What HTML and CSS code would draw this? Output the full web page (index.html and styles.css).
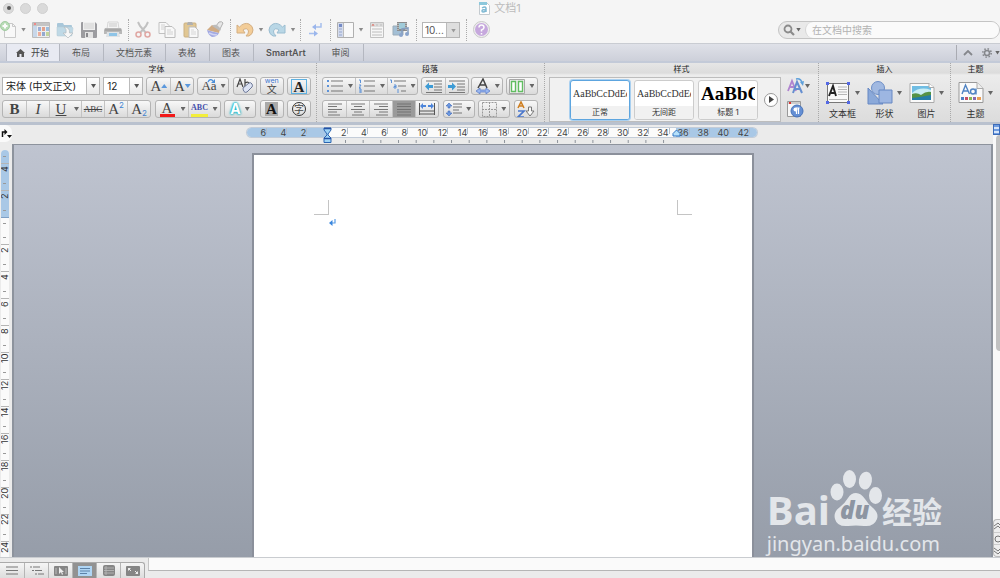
FILE: index.html
```html
<!DOCTYPE html>
<html lang="zh-CN">
<head>
  <meta charset="UTF-8" />
  <meta name="viewport" content="width=device-width, initial-scale=1.0" />
  <title>文档1</title>
  <link rel="stylesheet" href="styles.css">
</head>
<body>
  <header class="titlebar">
    <div class="lights">
      <button class="light edited" aria-label="关闭"></button>
      <button class="light" aria-label="最小化"></button>
      <button class="light" aria-label="缩放"></button>
    </div>
    <h1 class="doc-title">
      <svg width="11" height="13" viewBox="0 0 11 13"><path d="M.5.5h7l3 3v9H.5z" fill="#fff" stroke="#c4cbd0"/><path d="M0 0h8v3H0z" fill="#8cc8dc"/><path d="M3 6q3-2 4 0v4M7 8q-4-1-4 1t4 0" fill="none" stroke="#7fb9d3" stroke-width="1.5"/></svg>
      文档1
    </h1>
  </header>

  <div class="toolbar">
    <button class="tool tool-new" aria-label="新建">
      <svg width="18" height="18" viewBox="0 0 18 18"><path d="M4.500 2.500h8l3 3v11h-11z" fill="#fafafa" stroke="#bbb"/><path d="M12.500 2.500v3h3" fill="none" stroke="#bbb"/><circle cx="5" cy="5" r="4.500" fill="#a4d4a2" stroke="#86bd85"/><path d="M5 2.500v5M2.500 5h5" stroke="#fff" stroke-width="2"/></svg>
    </button>
    <button class="drop" aria-label="新建选项"></button>
    <button class="tool" aria-label="模板">
      <svg width="18" height="18" viewBox="0 0 18 18"><path d="M.5 1.500h17v15H.5z" fill="#ececec" stroke="#aaa"/><path d="M1 2h16v3H1z" fill="#b4b4b4"/><path d="M2 3h2" stroke="#e66" stroke-width="2"/><path d="M1 5h4v11H1z" fill="#b9cde5"/><path d="M6 6h3v4H6z" fill="#7f98cc"/><path d="M10 6h3v4h-3z" fill="#dc8668"/><path d="M14 6h3v4h-3z" fill="#7fabd8"/><path d="M6 11h3v4H6z" fill="#e9967d"/><path d="M10 11h3v4h-3z" fill="#7490c4"/><path d="M14 11h3v4h-3z" fill="#b1c980"/></svg>
    </button>
    <button class="tool" aria-label="打开">
      <svg width="18" height="18" viewBox="0 0 18 18"><path d="M1 3q0-1 1-1h5l1 2h7q1 0 1 1v9q0 1-1 1H2q-1 0-1-1z" fill="#8fb8d1"/><path d="M1 6h15l1 1-1 7q0 1-1 1H2q-1 0-1-1z" fill="#aed0e2" stroke="#a3bfcf" stroke-width=".6"/><path d="M8 6q6 0 5.500 6H17l-5 5-5-5h3q1-4-2-6z" fill="#f8f8f8" stroke="#9da8ae" stroke-width=".7"/></svg>
    </button>
    <button class="tool" aria-label="存储">
      <svg width="16" height="16" viewBox="0 0 16 16"><path d="M1 0h13l2 2v13q0 1-1 1H1q-1 0-1-1V1q0-1 1-1z" fill="#7f7f84"/><path d="M2 0h12v8H2z" fill="#eee"/><path d="M3 2h10M3 4h10M3 6h10" stroke="#c5c5c5"/><path d="M4 10h8v6H4z" fill="#dedede"/><path d="M5 11h2v4H5z" fill="#66666b"/></svg>
    </button>
    <button class="tool" aria-label="打印">
      <svg width="18" height="17" viewBox="0 0 18 17"><path d="M4 1h10l1 7H3z" fill="#f4f4f4" stroke="#bbb" stroke-width=".7"/><path d="M5 3h8M5 5h8" stroke="#bbb"/><path d="M1 7h16l1 2v4H0V9z" fill="#a4a4a4"/><path d="M1 9h16" stroke="#777"/><path d="M3 11h12l1 5H2z" fill="#d7dce0"/><path d="M5 12h8v3H5z" fill="#6cb4e3"/></svg>
    </button>
    <span class="divider"></span>
    <button class="tool" aria-label="剪切">
      <svg width="16" height="17" viewBox="0 0 16 17"><path d="M3 1l2 4 6 7M13 1l-2 4-6 7" fill="none" stroke="#b0b0b0" stroke-width="2"/><circle cx="3.500" cy="13.500" r="2.500" fill="none" stroke="#d98d88" stroke-width="1.500"/><circle cx="12.500" cy="13.500" r="2.500" fill="none" stroke="#d98d88" stroke-width="1.500"/></svg>
    </button>
    <button class="tool" aria-label="拷贝">
      <svg width="18" height="17" viewBox="0 0 18 17"><path d="M1 1.500h7l3 3v8H1z" fill="#f9f9f9" stroke="#b0b0b0"/><path d="M7 5.500h7l3 3v8H7z" fill="#f9f9f9" stroke="#a8a8a8"/><path d="M3 4h4M3 6h4M3 8h3M9 9h4M9 11h6M9 13h6" stroke="#c6c6c6"/></svg>
    </button>
    <button class="tool" aria-label="粘贴">
      <svg width="16" height="17" viewBox="0 0 16 17"><rect x="1" y="2" width="12" height="14" rx="1" fill="#dbb873" stroke="#bd9a5c"/><path d="M4 3l1-2h4l1 2v1H4z" fill="#999"/><path d="M6 6h6l3 3v7.500H6z" fill="#fafafa" stroke="#aaa"/><path d="M8 9h3M8 11h5M8 13h5" stroke="#ccc"/></svg>
    </button>
    <button class="tool" aria-label="格式刷">
      <svg width="18" height="17" viewBox="0 0 18 17"><path d="M13 1q3-1 4 1l-3 6-4-3z" fill="#e4e4e4" stroke="#999"/><path d="M6 4l8 4-1 4L1 9z" fill="#c4935f"/><path d="M6 5q2-2 5-1l4 4-1 2z" fill="#a9a9a9"/><path d="M1 9q6 2 12 3-2 4-7 4-4-2-5-7z" fill="#8892dc"/><path d="M3 12q4 2 8 2" fill="none" stroke="#c5caf3" stroke-width="1.500"/></svg>
    </button>
    <span class="divider"></span>
    <button class="tool" aria-label="撤销">
      <svg width="18" height="16" viewBox="0 0 18 16"><path d="M1 3l2.500 2Q8 0 13 2q4 2 4 6t-4 6h-3q3-3 2.500-5Q11 5 7 8l2 3H1z" fill="#f3c07a" stroke="#c9985d"/></svg>
    </button>
    <button class="drop" aria-label="撤销列表"></button>
    <button class="tool" aria-label="恢复">
      <svg width="18" height="16" viewBox="0 0 18 16"><path d="M17 3l-2.500 2Q10 0 5 2 1 4 1 8t4 6h3Q5 11 5.500 9 7 5 11 8l-2 3h8z" fill="#a6cde2" stroke="#7dabc5"/></svg>
    </button>
    <button class="drop" aria-label="恢复列表"></button>
    <span class="divider"></span>
    <button class="tool" aria-label="显示编辑标记">
      <svg width="14" height="15" viewBox="0 0 14 15"><path d="M13 1v4H7M1 11.500h6" fill="none" stroke="#8badec" stroke-width="1.500"/><path d="M8 2v6L4 5zM6 8.500v6l4-3z" fill="#7da1ea"/></svg>
    </button>
    <span class="divider"></span>
    <button class="tool" aria-label="边栏">
      <svg width="17" height="16" viewBox="0 0 17 16"><path d="M.5.5h16v15H.5z" fill="#fbfbfb" stroke="#999"/><path d="M1 1h5v14H1z" fill="#c9d3ea"/><path d="M6.500 1v14" stroke="#aaa"/><path d="M2 2h3v3H2z" fill="#4b68b5"/><path d="M2 7h3M2 10h3M2 13h3" stroke="#91a4ce" stroke-width="1.500"/></svg>
    </button>
    <button class="drop" aria-label="边栏选项"></button>
    <button class="tool" aria-label="工具箱">
      <svg width="14" height="16" viewBox="0 0 14 16"><path d="M.5.500h13v15H.5z" fill="#f7f7f7" stroke="#b0b0b0"/><path d="M1 1h12v4H1z" fill="#d6d6d6"/><path d="M2 4l1-2 1 2" fill="none" stroke="#d35f52"/><path d="M6 3h2M10 3h2M2 7h10M2 10h10M2 13h10" stroke="#aaa"/></svg>
    </button>
    <button class="tool" aria-label="媒体浏览器">
      <svg width="18" height="17" viewBox="0 0 18 17"><path d="M1 5h10v9H1z" fill="#88aecb" stroke="#7f94a6"/><path d="M5 1h10v9H5z" fill="#6a6a6a"/><path d="M7 2h6v6H7z" fill="#84bed0"/><path d="M6 2v7M14 2v7" stroke="#ddd" stroke-dasharray="1 1"/><path d="M10 14V8l6-1v6" fill="none" stroke="#5f80ad" stroke-width="1.500"/><circle cx="9" cy="14" r="2" fill="#6789bd"/><circle cx="15" cy="13" r="2" fill="#6789bd"/></svg>
    </button>
    <span class="divider"></span>
    <label class="combo zoom">
      <select aria-label="缩放比例"><option>10...</option></select>
    </label>
    <span class="divider"></span>
    <button class="tool" aria-label="帮助">
      <svg width="17" height="17" viewBox="0 0 17 17"><circle cx="8.500" cy="8.500" r="8" fill="#eee" stroke="#bbb"/><circle cx="8.500" cy="8.500" r="6.500" fill="#b78fd6"/><path d="M6 6.500Q6 4 8.500 4T11 6.500q0 1.500-2.500 2.500v1.500M8.500 12v1.500" fill="none" stroke="#fff" stroke-width="1.500"/></svg>
    </button>
    <form class="search" role="search">
      <button class="search-kind" type="button" aria-label="搜索范围">
        <svg width="12" height="12" viewBox="0 0 12 12"><circle cx="5" cy="5" r="3.500" fill="none" stroke="#8b8b8b" stroke-width="1.800"/><path d="M7.500 7.500L11 11" stroke="#8b8b8b" stroke-width="2.200"/></svg>
        <span class="caret"></span>
      </button>
      <input type="text" placeholder="在文档中搜索" aria-label="在文档中搜索" />
    </form>
  </div>

  <nav class="tabs">
    <a href="#" class="tab active">
      <svg width="9" height="8" viewBox="0 0 9 8"><path d="M4.500 0L9 4H8v4H5.500V5h-2v3H1V4H0z" fill="#555"/></svg>
      开始
    </a>
    <a href="#" class="tab">布局</a>
    <a href="#" class="tab">文档元素</a>
    <a href="#" class="tab">表格</a>
    <a href="#" class="tab">图表</a>
    <a href="#" class="tab latin">SmartArt</a>
    <a href="#" class="tab">审阅</a>
    <div class="tab-tools">
      <button aria-label="折叠功能区"><svg width="10" height="6" viewBox="0 0 10 6"><path d="M1 5l4-4 4 4" fill="none" stroke="#85878c" stroke-width="1.800"/></svg></button>
      <button aria-label="功能区设置"><svg width="10" height="10" viewBox="0 0 10 10"><circle cx="5" cy="5" r="2.500" fill="none" stroke="#85878c" stroke-width="1.500"/><circle cx="5" cy="5" r="4.200" fill="none" stroke="#85878c" stroke-width="1.600" stroke-dasharray="1.500 1.800"/></svg><span class="caret"></span></button>
    </div>
  </nav>

  <main class="ribbon">
    <section class="group group-font">
      <h2>字体</h2>
      <div class="row">
        <label class="combo font-name"><select aria-label="字体"><option>宋体 (中文正文)</option></select></label>
        <label class="combo font-size"><select aria-label="字号"><option>12</option></select></label>
        <div class="seg">
          <button class="serif" aria-label="增大字号">A<i class="up"></i></button>
          <button class="serif" aria-label="减小字号">A<i class="down"></i></button>
        </div>
        <div class="seg"><button class="wide serif case" aria-label="更改大小写"><svg class="arc" width="9" height="6" viewBox="0 0 9 6"><path d="M1 4q2-4 5-1" fill="none" stroke="#4c8fd8" stroke-width="1.300"/><path d="M8 1v4H4z" fill="#4c8fd8"/></svg>Aa<span class="caret"></span></button></div>
        <div class="seg"><button aria-label="清除格式"><svg width="18" height="16" viewBox="0 0 18 16"><path d="M1 9l3-8 3 8M2 6h4M9 1v8q4 0 4-3T9 5" fill="none" stroke="#444" stroke-width="1.200"/><path d="M7 10l6-5q2-1 3 1t0 3l-5 5q-2 1-3-.500T7 10z" fill="#dce3f4" stroke="#6d7897"/></svg></button></div>
        <div class="seg"><button class="pinyin" aria-label="拼音指南"><small>wen</small><span>文</span></button></div>
        <div class="seg"><button class="serif" aria-label="字符边框"><b class="boxed">A</b></button></div>
      </div>
      <div class="row">
        <div class="seg">
          <button class="serif" aria-label="粗体"><b>B</b></button>
          <button class="serif" aria-label="斜体"><em>I</em></button>
          <button class="serif" aria-label="下划线"><u>U</u></button>
          <button class="slim" aria-label="下划线样式"><span class="caret"></span></button>
          <button class="serif strike" aria-label="删除线"><s>ABC</s></button>
          <button class="serif" aria-label="上标">A<sup>2</sup></button>
          <button class="serif" aria-label="下标">A<sub>2</sub></button>
        </div>
        <div class="seg">
          <button class="serif" aria-label="字体颜色"><span class="swatch red">A</span></button>
          <button class="slim" aria-label="字体颜色选项"><span class="caret"></span></button>
          <button class="serif" aria-label="突出显示"><span class="swatch yellow">ABC</span></button>
          <button class="slim" aria-label="突出显示选项"><span class="caret"></span></button>
        </div>
        <div class="seg"><button class="wide" aria-label="文字效果"><b class="glow">A</b><span class="caret"></span></button></div>
        <div class="seg"><button class="serif" aria-label="字符底纹"><b class="shaded">A</b></button></div>
        <div class="seg"><button aria-label="带圈字符"><span class="circled">字</span></button></div>
      </div>
    </section>

    <section class="group group-para">
      <h2>段落</h2>
      <div class="row">
        <div class="seg">
          <button aria-label="项目符号"><svg width="16" height="14" viewBox="0 0 16 14"><path d="M4 2h12M4 7h12M4 12h12" stroke="#777" stroke-width="1.200"/><path d="M0 2h2M0 7h2M0 12h2" stroke="#5c92d8" stroke-width="2"/></svg></button>
          <button class="slim" aria-label="项目符号选项"><span class="caret"></span></button>
          <button aria-label="编号"><svg width="16" height="14" viewBox="0 0 16 14"><path d="M5 2h11M5 7h11M5 12h11" stroke="#777" stroke-width="1.200"/><path d="M0 1h1.500v3M0 6h2L0 9h2M0 10h2v4H0M0 12h2" fill="none" stroke="#5c92d8"/></svg></button>
          <button class="slim" aria-label="编号选项"><span class="caret"></span></button>
          <button class="wide" aria-label="多级列表"><svg width="17" height="14" viewBox="0 0 17 14"><path d="M4 2h12M8 7h8M11 12h5" stroke="#777" stroke-width="1.200"/><path d="M0 1h1.500v3M4 6h2v3H4V7.500h2M8 10v4" fill="none" stroke="#5c92d8"/></svg><span class="caret"></span></button>
        </div>
        <div class="seg">
          <button aria-label="减少缩进"><svg width="17" height="13" viewBox="0 0 17 13"><path d="M1 1h16M9 4h8M9 7h8M9 10h8M1 12.500h16" stroke="#777"/><path d="M0 6.500l4-4v2.500h4v3H4v2.500z" fill="#3d9bd5"/></svg></button>
          <button aria-label="增加缩进"><svg width="17" height="13" viewBox="0 0 17 13"><path d="M1 1h16M9 4h8M9 7h8M9 10h8M1 12.500h16" stroke="#777"/><path d="M8 6.500l-4-4v2.500H0v3h4v2.500z" fill="#3d9bd5"/></svg></button>
        </div>
        <div class="seg"><button class="wide" aria-label="中文版式"><svg width="16" height="16" viewBox="0 0 16 16"><path d="M3 10l5-9 4 9M5 7h6" fill="none" stroke="#444" stroke-width="1.500"/><path d="M1 13l4-3v2h6v-2l4 3-4 3v-2H5v2z" fill="#98b6f0" stroke="#5577c4" stroke-width=".7"/></svg><span class="caret"></span></button></div>
        <div class="seg"><button class="wide" aria-label="分栏"><svg width="16" height="15" viewBox="0 0 16 15"><path d="M.5.500h15v14H.5z" fill="#eee" stroke="#a7a7a7"/><path d="M2.500 2.500h4v10h-4zM9.500 2.500h4v10h-4z" fill="#fff" stroke="#61bd61" stroke-width="1.400"/></svg><span class="caret"></span></button></div>
      </div>
      <div class="row">
        <div class="seg">
          <button aria-label="左对齐"><svg width="14" height="13" viewBox="0 0 14 13"><path d="M0 1h14M0 3.500h9M0 6.500h14M0 9h9M0 12h12" stroke="#777"/></svg></button>
          <button aria-label="居中"><svg width="14" height="13" viewBox="0 0 14 13"><path d="M0 1h14M3 3.500h8M0 6.500h14M3 9h8M1 12h12" stroke="#777"/></svg></button>
          <button aria-label="右对齐"><svg width="14" height="13" viewBox="0 0 14 13"><path d="M0 1h14M5 3.500h9M0 6.500h14M5 9h9M2 12h12" stroke="#777"/></svg></button>
          <button class="on" aria-label="两端对齐" aria-pressed="true"><svg width="14" height="13" viewBox="0 0 14 13"><path d="M0 1h14M0 3.500h14M0 6.500h14M0 9h14M0 12h14" stroke="#727272"/></svg></button>
          <button aria-label="分散对齐"><svg width="16" height="14" viewBox="0 0 16 14"><path d="M.5 1v12M15.500 1v12M1 9h14M1 12h14" stroke="#555"/><path d="M1 4l3-3v2h3v2H4v2zM15 4l-3-3v2H9v2h3v2z" fill="#4d85da"/></svg></button>
        </div>
        <div class="seg"><button class="wide" aria-label="行距"><svg width="16" height="15" viewBox="0 0 16 15"><path d="M7 2h9M7 5h9M7 8h6M7 11h9" stroke="#777"/><path d="M3 1l3 3H4v2H2V4H0zM3 14l3-3H4V9H2v2H0z" fill="#6d9ae2" stroke="#3f69ba" stroke-width=".6"/></svg><span class="caret"></span></button></div>
        <div class="seg"><button class="wide" aria-label="边框"><svg width="15" height="15" viewBox="0 0 15 15"><path d="M.5.500h14v14H.5zM7.500 0v15M0 7.500h15" fill="none" stroke="#999" stroke-dasharray="2 1"/></svg><span class="caret"></span></button></div>
        <div class="seg"><button aria-label="排序"><svg width="18" height="17" viewBox="0 0 18 17"><path d="M1 7l3-6 3 6M2.500 5h3" fill="none" stroke="#cf8024" stroke-width="1.600"/><path d="M1 10h6l-6 6h6" fill="none" stroke="#4b77cc" stroke-width="1.700"/><path d="M11.500 6h3v4h2.500l-4 5-4-5h2.500z" fill="#f8f8f8" stroke="#777"/></svg></button></div>
      </div>
    </section>

    <section class="group group-style">
      <h2>样式</h2>
      <div class="style-body">
        <div class="gallery">
          <button class="card selected"><span class="sample">AaBbCcDdEe</span><span class="name">正常</span></button>
          <button class="card"><span class="sample">AaBbCcDdEe</span><span class="name">无间距</span></button>
          <button class="card"><span class="sample heading">AaBbC</span><span class="name">标题 1</span></button>
          <button class="more" aria-label="更多样式"><svg width="5" height="7" viewBox="0 0 5 7"><path d="M0 0l5 3.500L0 7z" fill="#444"/></svg></button>
        </div>
        <div class="style-tools">
          <button aria-label="更改样式"><svg width="17" height="18" viewBox="0 0 17 18"><path d="M1 14L5 4l4 10M2.500 10h5" fill="none" stroke="#b084cf" stroke-width="1.800"/><path d="M6 16l4-11 5 11M8 12h5" fill="none" stroke="#668fd0" stroke-width="2"/><path d="M9 2q5-1 6 4" fill="none" stroke="#5ea0db" stroke-width="1.500"/><path d="M13 5l4-1-1 5z" fill="#5ea0db"/></svg><span class="caret"></span></button>
          <button aria-label="样式窗格"><svg width="17" height="17" viewBox="0 0 17 17"><path d="M.5.500h13v15H.5z" fill="#f7f7f7" stroke="#999"/><path d="M1 1h12v2H1z" fill="#ccc"/><path d="M2 2h2" stroke="#d33" stroke-width="2"/><circle cx="10" cy="10" r="6" fill="#648fd4" stroke="#4672ba"/><path d="M9.500 13V7h3M11.500 7v6" fill="none" stroke="#fff" stroke-width="1.200"/><circle cx="8.500" cy="8.500" r="2" fill="#fff"/></svg></button>
        </div>
      </div>
    </section>

    <section class="group group-insert">
      <h2>插入</h2>
      <div class="bigs">
        <button class="big"><span class="pic"><svg width="26" height="24" viewBox="0 0 26 24"><path d="M2.500 2.500h21v19h-21z" fill="#f9f9f9" stroke="#777"/><path d="M4 15L8 5l3 10M6 12h4" fill="none" stroke="#222" stroke-width="1.900"/><path d="M13 6h9M13 8.500h9M13 11h9M13 13.500h9M4 18.500h18" stroke="#b7b7b7"/><path d="M1 1h3v3H1zM22 1h3v3h-3zM1 20h3v3H1zM22 20h3v3h-3z" fill="#5469e5"/></svg><span class="caret"></span></span>文本框</button>
        <button class="big"><span class="pic"><svg width="26" height="24" viewBox="0 0 26 24"><circle cx="11" cy="7" r="6.500" fill="#a1b9e1" stroke="#6e8fc7"/><path d="M1 7v16h15z" fill="#8ba9d9" stroke="#6688c3"/><path d="M12 9h13v13H12z" fill="#9db6e2" stroke="#6688c3"/></svg><span class="caret"></span></span>形状</button>
        <button class="big"><span class="pic"><svg width="26" height="24" viewBox="0 0 26 24"><path d="M1 2.500h19l5 4v15H1z" fill="#fafafa" stroke="#aaa"/><path d="M3 5h19v14H3z" fill="#70bde3"/><path d="M3 12q8-7 19-3v5q-10 0-19 3z" fill="#c9edf4"/><path d="M3 13q5-2 9 1 5-4 10-3v5q-9 3-19 1z" fill="#559246"/><path d="M3 17q9-1 19-3v5H3z" fill="#247da7"/><path d="M20 2.500v4h5" fill="#fff" stroke="#aaa"/></svg><span class="caret"></span></span>图片</button>
      </div>
    </section>

    <section class="group group-theme">
      <h2>主题</h2>
      <div class="bigs">
        <button class="big"><span class="pic"><svg width="26" height="24" viewBox="0 0 26 24"><path d="M1 1.500h18l6 6v14H1z" fill="#fafafa" stroke="#999"/><path d="M19 1.500v6h6" fill="#eee" stroke="#aaa"/><path d="M4 13L7.500 4l4 9M5 10h5" fill="none" stroke="#4f83c3" stroke-width="1.400"/><circle cx="15" cy="10.500" r="2.500" fill="none" stroke="#4f83c3" stroke-width="1.400"/><path d="M18 7.500v6" stroke="#4f83c3" stroke-width="1.400"/><path d="M3 16h3v3H3z" fill="#4e7fc3"/><path d="M7 16h3v3H7z" fill="#c64f65"/><path d="M11 16h3v3h-3z" fill="#8bb657"/><path d="M15 16h3v3h-3z" fill="#8c68ad"/><path d="M19 16h4v3h-4z" fill="#ec9f54"/></svg><span class="caret"></span></span>主题</button>
      </div>
    </section>
  </main>

  <div class="ruler-bar">
    <button class="tab-stop" aria-label="制表位"><svg width="11" height="11" viewBox="0 0 11 11"><path d="M1.500 9V4H4" fill="none" stroke="#111" stroke-width="1.500"/><path d="M3.500 1l3 3-3 3zM6 7h5L8.500 10z" fill="#111"/></svg></button>
    <div class="ruler">
      <div class="scale">
        <span>6</span><span>4</span><span>2</span><span class="zero"></span><span>2</span><span>4</span><span>6</span><span>8</span><span>10</span><span>12</span><span>14</span><span>16</span><span>18</span><span>20</span><span>22</span><span>24</span><span>26</span><span>28</span><span>30</span><span>32</span><span>34</span><span>36</span><span>38</span><span>40</span><span>42</span>
      </div>
      <svg class="stops" width="320" height="3"><path d="M0 1.500h320" stroke="#8e949c" stroke-width="3" stroke-dasharray="1 16.670"/></svg>
      <svg class="indent-left" width="9" height="17" viewBox="0 0 9 17"><path d="M1 1h7v2L5 7v1l3 3v4.500H1V11l3-3V7L1 3z" fill="#9fd4f6" stroke="#2b65b2"/><path d="M1 1.500h7M1 11.500h7" stroke="#2451a5" stroke-width="1.500"/></svg>
      <svg class="indent-right" width="9" height="8" viewBox="0 0 9 8"><path d="M4.500 1L8 4.500V7H1V4.500z" fill="#b6e0fa" stroke="#2f74c4"/></svg>
    </div>
  </div>

  <div class="workspace">
    <div class="v-ruler">
      <span class="first"></span><span class="margin">4</span><span class="margin">2</span><span class="origin"></span><span>2</span><span>4</span><span>6</span><span>8</span><span>10</span><span>12</span><span>14</span><span>16</span><span>18</span><span>20</span><span>22</span><span>24</span>
    </div>
    <div class="canvas">
      <article class="page" contenteditable="true" aria-label="文档正文">
        <div class="crops"><i class="crop left"></i><i class="crop right"></i></div>
        <p><svg width="7" height="7" viewBox="0 0 7 7"><path d="M6 0v4H2" fill="none" stroke="#5a9de6" stroke-width="1.200"/><path d="M0 4l3.500-3v6z" fill="#3a87de"/></svg></p>
      </article>
      <div class="watermark">
        <div class="brand">
          <span>Bai</span>
          <span class="paw">
            <svg width="52" height="58" viewBox="0 0 52 58" fill="#e3e6ea"><ellipse cx="7" cy="22" rx="6.500" ry="8.500"/><ellipse cx="19.500" cy="9" rx="6.500" ry="9"/><ellipse cx="35.500" cy="10.500" rx="6.500" ry="9" transform="rotate(10 35 10)"/><ellipse cx="45.500" cy="25.500" rx="6.500" ry="8.500"/><path d="M26 23q5 0 9 6 3 5 8 9 6 5 4 11-3 8-13 7-8-1-16 0-11 1-13-7-2-7 5-12 5-4 8-9 3-5 8-5z"/></svg>
            <b>du</b>
          </span>
          <span class="cjk">经验</span>
        </div>
        <div class="url">jingyan.baidu.com</div>
      </div>
    </div>
    <div class="scrollbar">
      <button class="split" aria-label="拆分窗口"></button>
      <div class="thumb"></div>
      <div class="browse">
        <button aria-label="上一页"><svg width="6" height="8" viewBox="0 0 6 8"><path d="M0 4l4-3 2 2M0 7l4-3 2 2" fill="none" stroke="#777"/></svg></button>
        <button aria-label="选择浏览对象"><svg width="6" height="8" viewBox="0 0 6 8"><circle cx="4" cy="4" r="3" fill="none" stroke="#777"/></svg></button>
        <button aria-label="下一页"><svg width="6" height="8" viewBox="0 0 6 8"><path d="M0 1l4 3 2-2M0 4l4 3 2-2" fill="none" stroke="#777"/></svg></button>
      </div>
    </div>
  </div>

  <footer class="status">
    <div class="views">
      <button aria-label="草稿视图"><svg width="12" height="9" viewBox="0 0 12 9"><path d="M0 1h12M0 4.500h12M0 8h12" stroke="#777"/></svg></button>
      <button aria-label="大纲视图"><svg width="14" height="9" viewBox="0 0 14 9"><path d="M0 1h2M3 1h7M2 4.500h2M5 4.500h7M5 8h2M8 8h6" stroke="#777"/></svg></button>
      <button aria-label="出版布局视图"><svg width="14" height="10" viewBox="0 0 14 10"><rect width="14" height="10" rx="1" fill="#858585"/><path d="M2 2v6M12 2v6" stroke="#bbb"/><path d="M5 1v7l2-2 1 3 1-1-1-2h2z" fill="#eee"/></svg></button>
      <button class="on" aria-label="页面视图" aria-pressed="true"><svg width="14" height="10" viewBox="0 0 14 10"><rect width="14" height="10" fill="#afd5f4"/><path d="M2 2.500h10M2 5h10M2 7.500h7" stroke="#5c82a8"/></svg></button>
      <button aria-label="笔记本视图"><svg width="12" height="11" viewBox="0 0 12 11"><rect width="12" height="11" rx="2" fill="#858585"/><path d="M1 3h10M1 5.500h10M1 8h10M3 1v9" stroke="#bbb" stroke-width=".8"/></svg></button>
      <button aria-label="全屏视图"><svg width="14" height="10" viewBox="0 0 14 10"><rect width="14" height="10" rx="1" fill="#858585"/><path d="M2 2h3L2 5zM12 8H9l3-3z" fill="#eee"/><path d="M3 3l2 2M11 7L9 5" stroke="#eee"/></svg></button>
    </div>
    <div class="h-scroll"></div>
  </footer>
</body>
</html>
```

FILE: styles.css
```css
* {
  box-sizing: border-box;
}
body {
  margin: 0;
  height: 100vh;
  display: flex;
  flex-direction: column;
  overflow: hidden;
  background: #f5f5f5;
  color: #333;
  font-family: Inter, "Liberation Sans", "Noto Sans CJK SC", sans-serif;
  font-size: 9px;
}
button {
  display: flex;
  align-items: center;
  justify-content: center;
  padding: 0;
  border: 0;
  background: none;
  color: inherit;
  font: inherit;
}
svg {
  display: block;
  flex: none;
}
h1, h2 {
  margin: 0;
  font-weight: normal;
}
.caret {
  flex: none;
  width: 5px;
  height: 4px;
  background: #666;
  clip-path: polygon(0 0, 100% 0, 50% 100%);
}

/* title bar */
.titlebar {
  display: grid;
  grid-template-columns: 1fr auto 1fr;
  align-items: center;
  height: 16px;
  flex: none;
}
.lights {
  display: flex;
  gap: 6px;
  padding-left: 3px;
}
.light {
  width: 11px;
  height: 11px;
  border: 1px solid #d0d0d0;
  border-radius: 50%;
  background: #dadada;
}
.edited::after {
  content: "";
  width: 4px;
  height: 4px;
  border-radius: 50%;
  background: #555;
}
.doc-title {
  display: flex;
  align-items: center;
  gap: 4px;
  font-size: 11px;
  line-height: 16px;
  color: #bbb;
}

/* standard toolbar */
.toolbar {
  display: flex;
  align-items: center;
  height: 27px;
  flex: none;
}
.tool {
  width: 24px;
  height: 20px;
  opacity: .75;
}
.tool-new {
  width: 18px;
}
.drop {
  width: 8px;
  height: 20px;
}
.tool-new + .drop {
  width: 11px;
}
.drop::after {
  content: "";
  width: 5px;
  height: 4px;
  background: #8b8b8b;
  clip-path: polygon(0 0, 100% 0, 50% 100%);
}
.divider {
  height: 22px;
  margin: 0 2px 0 3px;
  border-left: 1px dotted #aaa;
}
.combo {
  position: relative;
  height: 18px;
  border: 1px solid #b5b5b5;
  background: #fff;
}
.combo select {
  width: 100%;
  height: 100%;
  padding: 0 14px 0 3px;
  border: 0;
  background: none;
  appearance: none;
  color: #222;
  font: inherit;
  font-size: 10px;
}
.combo::before {
  content: "";
  position: absolute;
  top: 0;
  right: 0;
  bottom: 0;
  width: 12px;
  border-left: 1px solid #bbb;
  background: linear-gradient(#fff, #e9e9e9);
  pointer-events: none;
}
.combo::after {
  content: "";
  position: absolute;
  top: 6px;
  right: 3px;
  width: 5px;
  height: 4px;
  background: #555;
  clip-path: polygon(0 0, 100% 0, 50% 100%);
  pointer-events: none;
}
.zoom {
  width: 38px;
  height: 16px;
  margin: 0 3px;
}
.zoom select {
  padding: 0 0 0 2px;
  color: #555;
}
.zoom::before {
  background: #dedede;
}
.zoom::after {
  background: #999;
}
.search {
  display: flex;
  width: 222px;
  height: 18px;
  margin-left: auto;
  border: 1px solid #c4c4c4;
  border-radius: 9px;
  background: #e9e9e9;
}
.search-kind {
  width: 26px;
  gap: 1px;
}
.search input {
  flex: 1;
  min-width: 0;
  padding: 0 6px;
  border: 0;
  border-left: 1px solid #d5d5d5;
  border-radius: 9px;
  background: #fafafa;
  font: inherit;
  font-size: 10px;
}
.search input::placeholder {
  color: #b2b2b2;
}

/* ribbon tabs */
.tabs {
  display: flex;
  height: 20px;
  flex: none;
  padding-left: 6px;
  border-top: 1px solid #c9ccd2;
  border-bottom: 2px solid #c3cad8;
  background: linear-gradient(#dfe1e8, #cdd0da);
}
.tab {
  display: flex;
  align-items: center;
  gap: 6px;
  padding: 0 13px 0 12px;
  border-right: 1px solid #b4b7c0;
  color: #555;
  text-decoration: none;
}
.tab.active {
  padding: 0 10px 0 9px;
  border-left: 1px solid #b9bcc6;
  background: #e8eaf2;
  color: #444;
}
.tab.latin {
  font-weight: 600;
}
.tab-tools {
  display: flex;
  gap: 9px;
  margin: 1px 0 1px auto;
  padding-left: 6px;
  border-left: 1px solid #a9abb2;
}
.tab-tools button {
  gap: 3px;
}

/* ribbon groups */
.ribbon {
  display: flex;
  height: 62px;
  flex: none;
  border-bottom: 3px solid #b9c1ce;
  background: linear-gradient(#e6e6e6 0, #dcdcdc 10px, #ececec 12px, #dcdcdc);
}
.group {
  flex: none;
  border-right: 1px dotted #a9a9a9;
}
.group h2 {
  height: 12px;
  margin-bottom: 2px;
  font-size: 8px;
  line-height: 12px;
  text-align: center;
  color: #222;
}
.group-font {
  width: 317px;
  padding: 0 5px 0 2px;
}
.group-para {
  width: 228px;
  padding: 0 6px 0 5px;
}
.group-style {
  width: 274px;
  padding: 0 4px;
}
.group-insert {
  width: 132px;
}
.group-theme {
  flex: 1;
  border: 0;
}
.row {
  display: flex;
  justify-content: space-between;
  height: 18px;
  margin-bottom: 5px;
}
.font-name {
  width: 98px;
}
.font-size {
  width: 40px;
}
.seg {
  display: flex;
  border: 1px solid #b4b4b4;
  border-radius: 3px;
  background: linear-gradient(#f8f8f8, #dadada);
  overflow: hidden;
}
.seg button {
  width: 23px;
  color: #444;
}
.seg button + button {
  border-left: 1px solid #c3c3c3;
}
.seg button.slim {
  width: 9px;
  border-left: 0;
}
.seg button.wide {
  width: 30px;
  gap: 4px;
}
.seg button:only-child:not(.wide) {
  width: 22px;
}
.seg .on {
  background: #9a9a9a;
}
.serif {
  font-family: "Liberation Serif", serif;
  font-size: 15px;
  line-height: 16px;
}
.case {
  position: relative;
  font-size: 13px;
}
.arc {
  position: absolute;
  top: 0;
  left: 9px;
}
.strike {
  font-size: 9px;
}
.up, .down {
  width: 6px;
  height: 4px;
  background: #5b98dd;
  clip-path: polygon(50% 0, 100% 100%, 0 100%);
}
.down {
  clip-path: polygon(0 0, 100% 0, 50% 100%);
}
sup, sub {
  font-family: Inter, sans-serif;
  font-size: 8px;
  line-height: 8px;
  color: #4484d1;
}
sup {
  align-self: flex-start;
}
sub {
  align-self: flex-end;
}
.pinyin {
  flex-direction: column;
  font-size: 10px;
  line-height: 10px;
}
.pinyin small {
  font-size: 7px;
  line-height: 6px;
  color: #3e74ce;
}
.boxed {
  width: 16px;
  height: 15px;
  border: 1px solid #5db1e1;
  line-height: 14px;
  color: #222;
}
.swatch {
  width: 15px;
  border-bottom: 3px solid #f21919;
  line-height: 12px;
  text-align: center;
}
.swatch.yellow {
  width: 17px;
  border-color: #f3ee3b;
  font-size: 8px;
  font-weight: bold;
  color: #454eac;
}
.glow {
  font-size: 14px;
  line-height: 16px;
  color: #fff;
  text-shadow: 0 0 2px #16b8c9, 0 0 2px #16b8c9, 0 0 3px #16b8c9;
}
.shaded {
  width: 13px;
  line-height: 14px;
  background: #aaa;
  color: #111;
}
.circled {
  width: 14px;
  height: 14px;
  border: 1px solid #333;
  border-radius: 50%;
  font-size: 10px;
  line-height: 12px;
}

/* styles gallery */
.style-body {
  display: flex;
  gap: 6px;
}
.gallery {
  display: flex;
  align-items: center;
  gap: 4px;
  width: 232px;
  height: 45px;
  padding-left: 20px;
  border: 1px solid #bdbdbd;
  background: #f1f1f1;
}
.card {
  flex-direction: column;
  width: 60px;
  height: 40px;
  border: 1px solid #ccc;
  border-radius: 3px;
  background: #fff;
  overflow: hidden;
}
.card.selected {
  border-color: #5da5df;
  box-shadow: 0 0 0 1px #a9d0f0;
}
.sample {
  flex: 1;
  width: 54px;
  overflow: hidden;
  white-space: nowrap;
  text-align: left;
  font-family: "Liberation Serif", serif;
  font-size: 10px;
  line-height: 25px;
  color: #333;
}
.sample.heading {
  font-size: 19px;
  font-weight: bold;
  color: #000;
}
.name {
  width: 100%;
  font-size: 8px;
  line-height: 13px;
  background: #f1f1f1;
}
.more {
  width: 14px;
  height: 14px;
  margin-left: 2px;
  border: 1px solid #999;
  border-radius: 50%;
  background: #fff;
}
.style-tools {
  display: flex;
  flex-direction: column;
  align-items: flex-start;
  gap: 6px;
}
.style-tools button {
  gap: 1px;
}

/* large ribbon buttons */
.bigs {
  display: flex;
  justify-content: center;
  padding-top: 4px;
}
.big {
  flex-direction: column;
  width: 42px;
  font-size: 9px;
  line-height: 14px;
}
.pic {
  display: flex;
  align-items: center;
  gap: 4px;
  margin-bottom: 2px;
}

/* rulers */
.ruler-bar {
  display: flex;
  height: 19px;
  flex: none;
  padding-right: 8px;
  background: #ebebeb;
}
.tab-stop {
  width: 12px;
  height: 17px;
  border-radius: 0 7px 7px 0;
  background: #fafafa;
}
.ruler {
  position: relative;
  width: 510px;
  margin: 3px auto 0;
}
.scale {
  display: grid;
  grid-template-columns: repeat(25, 1fr);
  height: 9px;
  padding-right: 7px;
  border-radius: 5px;
  background: linear-gradient(to right, #a9c8e6 80px, #fbfbfb 80px, #fbfbfb 429px, #a9c8e6 429px);
  box-shadow: 0 0 0 1px #c3ccd8;
  font-size: 9px;
  line-height: 9px;
  text-align: right;
  color: #444;
}
.scale span {
  padding-right: 1px;
  background: linear-gradient(#b5bcc5, #b5bcc5) right top / 1px 6px no-repeat;
}
.scale .zero {
  background: none;
}
.stops {
  position: absolute;
  top: 12px;
  left: 98px;
}
.indent-left {
  position: absolute;
  top: -1px;
  left: 76px;
}
.indent-right {
  position: absolute;
  top: 1px;
  left: 425px;
}

/* document area */
.workspace {
  display: flex;
  flex: 1;
  min-height: 0;
  background: #ebebeb;
}
.v-ruler {
  width: 8px;
  margin: 6px 3px 0 1px;
  border-radius: 4px 4px 0 0;
  overflow: hidden;
  background: #fafafa;
}
/* each cell is turned upside down so the digits read bottom to top */
.v-ruler span {
  display: flex;
  align-items: center;
  justify-content: center;
  width: 100%;
  height: 27px;
  padding-top: 16px;
  border-bottom: 1px solid #b5b5b5;
  background: linear-gradient(#999, #999) 3px 6px / 3px 1px no-repeat;
  line-height: 8px;
  writing-mode: vertical-rl;
  transform: rotate(180deg);
}
.v-ruler .first {
  height: 13px;
  padding: 0;
  border: 0;
  background-color: #a9c8e6;
}
.v-ruler .margin {
  background-color: #a9c8e6;
}
.v-ruler .origin {
  border-color: #7f9fc4;
  background-image: linear-gradient(#999, #999), linear-gradient(#999, #999);
  background-position: 3px 6px, 3px 20px;
}
.canvas {
  position: relative;
  flex: 1;
  overflow: hidden;
  border: solid #8d939d;
  border-width: 1px 2px 0;
  background: linear-gradient(#bfc4d0, #969da9);
}
.page {
  width: 502px;
  height: 100%;
  margin: 8px auto 0;
  padding: 45px 60px 0;
  border: solid #8b909b;
  border-width: 2px 2px 0;
  background: #fff;
}
.page p {
  margin: 4px 0 0 15px;
}
.crops {
  display: flex;
  justify-content: space-between;
}
.crop {
  width: 15px;
  height: 15px;
  border: 0 solid #c4c4c4;
}
.crop.left {
  border-width: 0 1px 1px 0;
}
.crop.right {
  border-width: 0 0 1px 1px;
}
.watermark {
  position: absolute;
  right: 49px;
  bottom: 0;
  color: #e3e6ea;
}
.brand {
  display: flex;
  align-items: flex-end;
  font-family: "Open Sans", sans-serif;
  font-size: 40px;
  font-weight: bold;
  line-height: 42px;
}
.paw {
  position: relative;
  margin-bottom: 3px;
}
.paw b {
  position: absolute;
  top: 28px;
  left: 10px;
  font-size: 24px;
  line-height: 24px;
  font-style: italic;
  color: #8d95a2;
}
.cjk {
  font-family: "Noto Sans CJK SC", sans-serif;
  font-size: 30px;
}
.url {
  font-family: "Noto Sans", sans-serif;
  font-size: 20px;
  line-height: 26px;
}

/* scroll bars and status bar */
.scrollbar {
  display: flex;
  flex-direction: column;
  width: 7px;
  margin-top: -20px;
  background: #f8f8f8;
}
.split {
  height: 11px;
  border: 1px solid #3c6cb9;
  background: repeating-linear-gradient(#6f9ce0 0 2px, #d5e5fa 2px 4px);
}
.thumb {
  height: 216px;
  margin-left: 3px;
  border-radius: 4px 0 0 4px;
  background: #c1c1c1;
}
.browse {
  margin-top: auto;
  border: 1px solid #bbb;
  border-right: 0;
  border-radius: 4px 0 0 4px;
  background: #eee;
}
.browse button {
  width: 6px;
  height: 12px;
}
.browse button + button {
  border-top: 1px solid #ccc;
}
.status {
  display: flex;
  height: 21px;
  flex: none;
  border-top: 1px solid #c9ccd0;
  background: #ebebeb;
}
.views {
  display: flex;
  margin: 4px 3px 0 0;
  border: 1px solid #aaa;
  border-width: 1px 1px 0 0;
  border-radius: 0 3px 0 0;
  background: linear-gradient(#f5f5f5, #ddd);
}
.views button {
  width: 24px;
}
.views button + button {
  border-left: 1px solid #b5b5b5;
}
.views .on {
  background: #929292;
}
.h-scroll {
  flex: 1;
  height: 13px;
  border-bottom: 1px solid #b5b5b5;
  border-left: 1px solid #c5c5c5;
  background: #fafafa;
}
```
